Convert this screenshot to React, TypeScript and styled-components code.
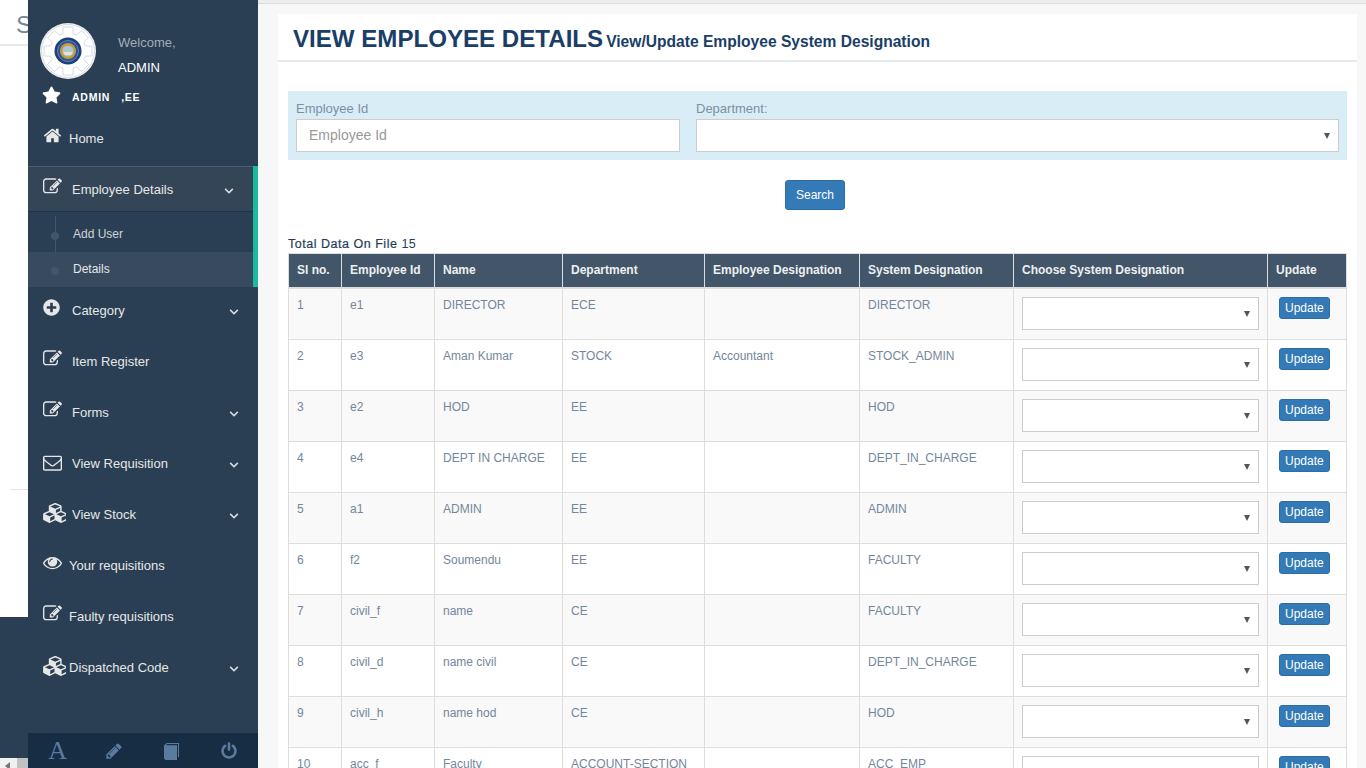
import React from 'react';
import styled, { createGlobalStyle } from 'styled-components';
import { FaChevronDown, FaPlusCircle, FaStar } from 'react-icons/fa';

const GlobalStyle = createGlobalStyle`
    html, body {
        margin: 0;
        height: 768px;
        overflow: hidden;
        background: #f7f7f7;
        font-family: "Liberation Sans", Arial, sans-serif;
        font-size: 13px;
        color: #73879c;
    }
    * {
        box-sizing: border-box;
    }
`;

const Page = styled.div`
    display: grid;
    grid-template-columns: 28px 230px 1fr;
    height: 768px;
    overflow: hidden;
`;

/* piece of the page behind the sidebar */
const BackStrip = styled.div`
    display: flex;
    flex-direction: column;
    background: #2a3f54;
    overflow: hidden;
`;

const BackContent = styled.div`
    height: 617px;
    background: #fff;
    overflow: hidden;
`;

const BackTitle = styled.div`
    height: 46px;
    padding: 10px 0 0 16px;
    border-bottom: 2px solid #e6e9ed;
    font-size: 24px;
    line-height: 30px;
    color: #73879c;
`;

const BackRule = styled.div`
    height: 1px;
    margin: 443px 0 0 10px;
    background: #e5e5e5;
`;

const BackScrollbar = styled.div`
    display: flex;
    align-items: center;
    height: 16px;
    margin-top: auto;
    padding-left: 5px;
    background: #f1f1f1;
`;

const ScrollArrow = styled.span`
    width: 0;
    height: 0;
    border-top: 4px solid transparent;
    border-bottom: 4px solid transparent;
    border-right: 5px solid #777;
`;

const ScrollThumb = styled.span`
    width: 11px;
    height: 16px;
    margin-left: 7px;
    background: #c1c1c1;
`;

const Sidebar = styled.aside`
    display: flex;
    flex-direction: column;
    height: 768px;
    background: #2a3f54;
    color: #e7e7e7;
`;

const Profile = styled.div`
    display: flex;
    height: 80px;
    padding: 23px 0 0 12px;
`;

const ProfileText = styled.div`
    margin-left: 22px;
    padding-top: 7px;
    font-size: 13px;
    line-height: 25px;
`;

const Welcome = styled.div`
    color: #a5adb5;
`;

const ProfileName = styled.div`
    color: #fff;
`;

const RoleRow = styled.div`
    display: flex;
    align-items: center;
    height: 32px;
    margin-bottom: 3px;
    padding-left: 14px;
    color: #fff;
    font-size: 10.5px;
    font-weight: 700;
    letter-spacing: 0.75px;
    white-space: pre;
`;

const RoleStar = styled(FaStar)`
    width: 19px;
    height: 18px;
    margin-top: -3px;
`;

const RoleText = styled.span`
    margin-left: 11px;
    margin-top: 1px;
`;

const MenuItem = styled.div`
    display: flex;
    align-items: center;
    height: 46px;
    margin-bottom: 5px;
    padding-left: 15px;
    font-size: 13px;
    color: #e7e7e7;
`;

const MenuIcon = styled.svg<{ $w: number; $h: number; $lift: number }>`
    flex: none;
    width: ${(p) => p.$w}px;
    height: ${(p) => p.$h}px;
    margin-top: -${(p) => p.$lift}px;
    fill: currentColor;
`;

const PlusIcon = styled(FaPlusCircle)`
    flex: none;
    width: 17px;
    height: 17px;
    margin: -5px 2px 0 0;
`;

const MenuLabel = styled.span<{ $left: number }>`
    margin-left: ${(p) => p.$left}px;
    margin-top: 1px;
`;

const Chevron = styled(FaChevronDown)`
    width: 10px;
    height: 10px;
    margin-left: auto;
    margin-right: 19px;
    margin-top: 3px;
    color: #d5dade;
`;

const ActiveGroup = styled.div`
    border-right: 5px solid #1abb9c;
`;

const ActiveHead = styled.div`
    display: flex;
    align-items: center;
    height: 46px;
    padding-left: 15px;
    border-top: 1px solid #4a5c6d;
    border-bottom: 1px solid #1f3346;
    background: #334557;
    color: #e7e7e7;

    ${Chevron} {
        margin-right: 19px;
    }
`;

const SubList = styled.div`
    position: relative;
    padding-top: 5px;

    &::before {
        content: '';
        position: absolute;
        left: 27px;
        top: 4px;
        bottom: 0;
        width: 1px;
        background: #425668;
    }
`;

const SubItem = styled.div<{ $current?: boolean }>`
    position: relative;
    display: flex;
    align-items: center;
    height: 35px;
    padding: 0 0 2px 45px;
    font-size: 12px;
    color: ${(p) => (p.$current ? '#e7e7e7' : '#cfd5da')};
    background: ${(p) => (p.$current ? '#374a5e' : 'transparent')};

    &::before {
        content: '';
        position: absolute;
        left: 23px;
        top: 15px;
        width: 8px;
        height: 8px;
        border-radius: 50%;
        background: #425668;
    }
`;

const SideFooter = styled.div`
    display: grid;
    grid-template-columns: repeat(4, 1fr);
    align-items: center;
    justify-items: center;
    height: 35px;
    margin-top: auto;
    background: #172d44;
    color: #5a7ba0;
`;

const FooterLetter = styled.span`
    padding-left: 2px;
    font-family: "Liberation Serif", serif;
    font-size: 26px;
    line-height: 35px;
`;

const FooterIcon = styled.svg`
    width: 18px;
    height: 18px;
    fill: currentColor;
`;

const Main = styled.main`
    min-width: 0;
    background: #f7f7f7;
`;

const TopStrip = styled.div`
    height: 4px;
    background: #ededed;
    border-bottom: 1px solid #d9dee4;
`;

const Panel = styled.section`
    width: 1079px;
    height: 760px;
    margin: 10px 0 0 20px;
    background: #fff;
    overflow: hidden;
`;

const PanelTitle = styled.header`
    display: flex;
    align-items: baseline;
    height: 48px;
    padding: 10px 0 0 15px;
    border-bottom: 2px solid #e6e9ed;
    color: #1a3e68;
    white-space: nowrap;
`;

const TitleMain = styled.h1`
    margin: 0;
    font-size: 24.1px;
    line-height: 30px;
    font-weight: 700;
`;

const TitleSub = styled.small`
    margin-left: 3px;
    font-size: 15.6px;
    font-weight: 700;
`;

const PanelBody = styled.div`
    padding: 29px 10px 0;
`;

const FilterBar = styled.div`
    display: grid;
    grid-template-columns: 384px 643px;
    column-gap: 16px;
    height: 69px;
    padding: 9px 8px 0;
    background: #d9edf7;
`;

const Field = styled.label`
    display: block;
`;

const FieldLabel = styled.div`
    height: 19px;
    font-size: 13px;
    line-height: 18px;
    color: #7d8fa3;
`;

const TextInput = styled.input`
    display: block;
    width: 100%;
    height: 33px;
    padding: 0 12px 1px;
    border: 1px solid #ccc;
    background: #fff;
    font-family: inherit;
    font-size: 14px;
    outline: none;

    &::placeholder {
        color: #999;
        opacity: 1;
    }
`;

const SelectBox = styled.div`
    position: relative;

    &::after {
        content: '';
        position: absolute;
        right: 9px;
        top: 14px;
        border-left: 3px solid transparent;
        border-right: 3px solid transparent;
        border-top: 6px solid #555;
        pointer-events: none;
    }
`;

const Select = styled.select`
    display: block;
    width: 100%;
    height: 33px;
    border: 1px solid #ccc;
    background: #fff;
    appearance: none;
    outline: none;
`;

const SearchRow = styled.div`
    display: flex;
    justify-content: center;
    margin-top: 20px;
    padding-right: 5px;
`;

const Button = styled.button<{ $small?: boolean }>`
    display: block;
    height: ${(p) => (p.$small ? 22 : 30)}px;
    padding: ${(p) => (p.$small ? '0 5px' : '0 10px')};
    border: 1px solid #2e6da4;
    border-radius: 3px;
    background: #337ab7;
    color: #fff;
    font-family: inherit;
    font-size: 12px;
`;

const TotalLine = styled.div`
    height: 18px;
    margin-top: 25px;
    font-size: 12.5px;
    line-height: 18px;
    letter-spacing: 0.52px;
    color: #1f3d5c;
`;

const TotalLabel = styled.span`
    -webkit-text-stroke: 0.2px #1f3d5c;
`;

const Table = styled.table`
    width: 1058px;
    table-layout: fixed;
    border-collapse: collapse;
    border: 1px solid #ddd;
    font-size: 12px;
`;

const HeadCell = styled.th`
    height: 34px;
    padding: 0 8px;
    border-right: 1px solid #d9dee4;
    border-bottom: 2px solid #ddd;
    background: #435568;
    color: #ecf0f1;
    font-size: 12px;
    font-weight: 700;
    text-align: left;
    white-space: nowrap;
`;

const Row = styled.tr<{ $odd: boolean }>`
    background: ${(p) => (p.$odd ? '#f9f9f9' : '#fff')};
`;

const Cell = styled.td`
    height: 51px;
    padding: 8px 8px 0;
    border: 1px solid #ddd;
    vertical-align: top;
    line-height: 17px;
    color: #73879c;
    white-space: nowrap;

    tr:first-child > & {
        height: 52px;
    }
`;

const ButtonCell = styled(Cell)`
    padding-left: 11px;
`;

const columns = [
    { title: 'Sl no.', width: 53 },
    { title: 'Employee Id', width: 93 },
    { title: 'Name', width: 128 },
    { title: 'Department', width: 142 },
    { title: 'Employee Designation', width: 155 },
    { title: 'System Designation', width: 154 },
    { title: 'Choose System Designation', width: 254 },
    { title: 'Update', width: 79 },
];

const employees = [
    ['1', 'e1', 'DIRECTOR', 'ECE', '', 'DIRECTOR'],
    ['2', 'e3', 'Aman Kumar', 'STOCK', 'Accountant', 'STOCK_ADMIN'],
    ['3', 'e2', 'HOD', 'EE', '', 'HOD'],
    ['4', 'e4', 'DEPT IN CHARGE', 'EE', '', 'DEPT_IN_CHARGE'],
    ['5', 'a1', 'ADMIN', 'EE', '', 'ADMIN'],
    ['6', 'f2', 'Soumendu', 'EE', '', 'FACULTY'],
    ['7', 'civil_f', 'name', 'CE', '', 'FACULTY'],
    ['8', 'civil_d', 'name civil', 'CE', '', 'DEPT_IN_CHARGE'],
    ['9', 'civil_h', 'name hod', 'CE', '', 'HOD'],
    ['10', 'acc_f', 'Faculty', 'ACCOUNT-SECTION', '', 'ACC_EMP'],
];

// old-style font awesome outlines, the current package only has the redrawn ones
const glyphs = {
    edit: {
        box: '0 0 1792 1792',
        w: 19,
        h: 19,
        lift: 6,
        d: 'M888 1184l116-116-152-152-116 116v56h96v96h56zm440-720q-16-16-33 1l-350 350q-17 17-1 33t33-1l350-350q17-17 1-33zm80 594v190q0 119-84.5 203.5t-203.5 84.5h-832q-119 0-203.5-84.5t-84.5-203.5v-832q0-119 84.5-203.5t203.5-84.5h832q63 0 117 25 15 7 18 23 3 17-9 29l-49 49q-14 14-32 8-23-6-45-6h-832q-66 0-113 47t-47 113v832q0 66 47 113t113 47h832q66 0 113-47t47-113v-126q0-13 9-22l64-64q15-15 35-7t20 29zm-96-738l288 288-672 672h-288v-288zm444 132l-92 92-288-288 92-92q28-28 68-28t68 28l152 152q28 28 28 68t-28 68z',
    },
    home: {
        box: '0 0 1792 1792',
        w: 19,
        h: 19,
        lift: 5,
        d: 'M1472 992v480q0 26-19 45t-45 19h-384v-384h-256v384h-384q-26 0-45-19t-19-45v-480q0-1 .5-3t.5-3l575-474 575 474q1 2 1 6zm223-69l-62 74q-8 9-21 11h-3q-13 0-21-7l-692-577-692 577q-12 8-24 7-13-2-21-11l-62-74q-8-10-7-23.5t11-21.5l719-599q32-26 76-26t76 26l244 204v-195q0-14 9-23t23-9h192q14 0 23 9t9 23v408l219 182q10 8 11 21.5t-7 23.5z',
    },
    cubes: {
        box: '0 0 2048 1792',
        w: 23,
        h: 20,
        lift: 2,
        d: 'M640 1632l384-192v-314l-384 164v342zm-64-454l404-173-404-173-404 173zm1088 454l384-192v-314l-384 164v342zm-64-454l404-173-404-173-404 173zm-448-293l384-165v-266l-384 164v267zm-64-379l441-189-441-189-441 189zm1088 518v416q0 36-19 67t-52 47l-448 224q-25 14-57 14t-57-14l-448-224q-4-2-7-4-2 2-7 4l-448 224q-25 14-57 14t-57-14l-448-224q-33-16-52-47t-19-67v-416q0-38 21.5-70t56.5-48l434-186v-400q0-38 21.5-70t56.5-48l448-192q23-10 50-10t50 10l448 192q35 16 56.5 48t21.5 70v400l434 186q36 16 57 48t21 70z',
    },
    envelope: {
        box: '0 0 1792 1792',
        w: 19,
        h: 19,
        lift: 2,
        d: 'M1664 1504v-768q-32 36-69 66-268 206-426 338-51 43-83 67t-86.5 48.5-102.5 24.5h-2q-48 0-102.5-24.5t-86.5-48.5-83-67q-158-132-426-338-37-30-69-66v768q0 13 9.5 22.5t22.5 9.5h1472q13 0 22.5-9.5t9.5-22.5zm0-1051v-24.5l-.5-13-3-12.5-5.5-9-9-7.5-14-2.5h-1472q-13 0-22.5 9.5t-9.5 22.5q0 168 147 284 193 152 401 317 6 5 35 29.5t46 37.5 44.5 31.5 50.5 27.5 43 9h2q20 0 43-9t50.5-27.5 44.5-31.5 46-37.5 35-29.5q208-165 401-317 54-43 100.5-115.5t46.5-131.5zm128-37v1088q0 66-47 113t-113 47h-1472q-66 0-113-47t-47-113v-1088q0-66 47-113t113-47h1472q66 0 113 47t47 113z',
    },
    eye: {
        box: '0 0 1792 1792',
        w: 19,
        h: 19,
        lift: 5,
        d: 'M1664 960q-152-236-381-353 61 104 61 225 0 185-131.5 316.5t-316.5 131.5-316.5-131.5-131.5-316.5q0-121 61-225-229 117-381 353 133 205 333.5 326.5t434.5 121.5 434.5-121.5 333.5-326.5zm-720-384q0-20-14-34t-34-14q-125 0-214.5 89.5t-89.5 214.5q0 20 14 34t34 14 34-14 14-34q0-86 61-147t147-61q20 0 34-14t14-34zm848 384q0 34-20 69-140 230-376.5 368.5t-499.5 138.5-499.5-139-376.5-368q-20-35-20-69t20-69q140-229 376.5-368t499.5-139 499.5 139 376.5 368q20 35 20 69z',
    },
};

type GlyphName = keyof typeof glyphs;

function Glyph({ name }: { name: GlyphName }) {
    const g = glyphs[name];
    return (
        <MenuIcon viewBox={g.box} $w={g.w} $h={g.h} $lift={g.lift} aria-hidden="true">
            <path d={g.d} />
        </MenuIcon>
    );
}

const menuItems: { icon: GlyphName | 'plus'; label: string; left: number; arrow: boolean }[] = [
    { icon: 'plus', label: 'Category', left: 10, arrow: true },
    { icon: 'edit', label: 'Item Register', left: 10, arrow: false },
    { icon: 'edit', label: 'Forms', left: 10, arrow: true },
    { icon: 'envelope', label: 'View Requisition', left: 10, arrow: true },
    { icon: 'cubes', label: 'View Stock', left: 6, arrow: true },
    { icon: 'eye', label: 'Your requisitions', left: 7, arrow: false },
    { icon: 'edit', label: 'Faulty requisitions', left: 7, arrow: false },
    { icon: 'cubes', label: 'Dispatched Code', left: 3, arrow: true },
];

function gearPoints() {
    const points: string[] = [];
    for (let i = 0; i < 8; i += 1) {
        const a = (i * Math.PI) / 4;
        [
            [-0.3, 18],
            [-0.2, 24.5],
            [0.2, 24.5],
            [0.3, 18],
        ].forEach(([offset, radius]) => {
            const x = 28 + radius * Math.sin(a + offset);
            const y = 28 - radius * Math.cos(a + offset);
            points.push(`${x.toFixed(1)},${y.toFixed(1)}`);
        });
    }
    return points.join(' ');
}

function Logo() {
    return (
        <svg width="56" height="56" viewBox="0 0 56 56" aria-hidden="true">
            <circle cx="28" cy="28" r="28" fill="#f0f2f3" />
            <circle cx="28" cy="28" r="26.5" fill="#fff" stroke="#d8dcdf" />
            <polygon points={gearPoints()} fill="#fff" stroke="#cbd8e2" strokeWidth="0.9" />
            <circle cx="28" cy="28" r="13.5" fill="#1e3f7a" />
            <circle cx="28" cy="28" r="10.5" fill="#2a5596" stroke="#8ea7c9" strokeWidth="0.6" />
            <circle cx="28" cy="28" r="8" fill="#c99a38" />
            <circle cx="28" cy="28" r="5.5" fill="#a9c7d6" />
            <path d="M23 29h10l-2 3h-6z" fill="#e9e4d2" />
        </svg>
    );
}

function App() {
    return (
        <Page>
            <GlobalStyle />
            <BackStrip>
                <BackContent>
                    <BackTitle>S</BackTitle>
                    <BackRule />
                </BackContent>
                <BackScrollbar>
                    <ScrollArrow />
                    <ScrollThumb />
                </BackScrollbar>
            </BackStrip>
            <Sidebar>
                <Profile>
                    <Logo />
                    <ProfileText>
                        <Welcome>Welcome,</Welcome>
                        <ProfileName>ADMIN</ProfileName>
                    </ProfileText>
                </Profile>
                <RoleRow>
                    <RoleStar />
                    <RoleText>ADMIN   ,EE</RoleText>
                </RoleRow>
                <MenuItem>
                    <Glyph name="home" />
                    <MenuLabel $left={7}>Home</MenuLabel>
                </MenuItem>
                <ActiveGroup>
                    <ActiveHead>
                        <Glyph name="edit" />
                        <MenuLabel $left={10}>Employee Details</MenuLabel>
                        <Chevron />
                    </ActiveHead>
                    <SubList>
                        <SubItem>Add User</SubItem>
                        <SubItem $current>Details</SubItem>
                    </SubList>
                </ActiveGroup>
                {menuItems.map((item) => (
                    <MenuItem key={item.label}>
                        {item.icon === 'plus' ? <PlusIcon /> : <Glyph name={item.icon} />}
                        <MenuLabel $left={item.left}>{item.label}</MenuLabel>
                        {item.arrow && <Chevron />}
                    </MenuItem>
                ))}
                <SideFooter>
                    <FooterLetter>A</FooterLetter>
                    <FooterIcon viewBox="0 0 1792 1792" aria-hidden="true">
                        <path d="M491 1536l91-91-235-235-91 91v107h128v128h107zm523-928q0-22-22-22-10 0-17 7l-542 542q-7 7-7 17 0 22 22 22 10 0 17-7l542-542q7-7 7-17zm-54-192l416 416-832 832h-416v-416zm683 96q0 53-37 90l-166 166-416-416 166-165q36-38 90-38 53 0 91 38l235 234q37 39 37 91z" />
                    </FooterIcon>
                    <FooterIcon viewBox="0 0 18 18" aria-hidden="true">
                        <path d="M1 3.5 3.5 1H16v14h-1V2H4L2.8 3.2H14V18H2.5L1 16.5z" />
                    </FooterIcon>
                    <FooterIcon viewBox="0 0 1792 1792" aria-hidden="true">
                        <path d="M1664 896q0 156-61 298t-164 245-245 164-298 61-298-61-245-164-164-245-61-298q0-182 80.5-343t226.5-270q43-32 95.5-25t83.5 50q32 42 24.5 94.5t-49.5 84.5q-98 74-151.5 181t-53.5 228q0 104 40.5 198.5t109.5 163.5 163.5 109.5 198.5 40.5 198.5-40.5 163.5-109.5 109.5-163.5 40.5-198.5q0-121-53.5-228t-151.5-181q-42-32-49.5-84.5t24.5-94.5q31-43 84-50t95 25q146 109 226.5 270t80.5 343zm-640-768v640q0 52-38 90t-90 38-90-38-38-90v-640q0-52 38-90t90-38 90 38 38 90z" />
                    </FooterIcon>
                </SideFooter>
            </Sidebar>
            <Main>
                <TopStrip />
                <Panel>
                    <PanelTitle>
                        <TitleMain>VIEW EMPLOYEE DETAILS</TitleMain>
                        <TitleSub>View/Update Employee System Designation</TitleSub>
                    </PanelTitle>
                    <PanelBody>
                        <FilterBar>
                            <Field>
                                <FieldLabel>Employee Id</FieldLabel>
                                <TextInput placeholder="Employee Id" />
                            </Field>
                            <Field>
                                <FieldLabel>Department:</FieldLabel>
                                <SelectBox>
                                    <Select />
                                </SelectBox>
                            </Field>
                        </FilterBar>
                        <SearchRow>
                            <Button>Search</Button>
                        </SearchRow>
                        <TotalLine>
                            <TotalLabel>Total Data On File</TotalLabel> 15
                        </TotalLine>
                        <Table>
                            <colgroup>
                                {columns.map((col) => (
                                    <col key={col.title} width={col.width} />
                                ))}
                            </colgroup>
                            <thead>
                                <tr>
                                    {columns.map((col) => (
                                        <HeadCell key={col.title}>{col.title}</HeadCell>
                                    ))}
                                </tr>
                            </thead>
                            <tbody>
                                {employees.map((row, index) => (
                                    <Row key={row[0]} $odd={index % 2 === 0}>
                                        {row.map((value, i) => (
                                            <Cell key={i}>{value}</Cell>
                                        ))}
                                        <Cell>
                                            <SelectBox>
                                                <Select />
                                            </SelectBox>
                                        </Cell>
                                        <ButtonCell>
                                            <Button $small>Update</Button>
                                        </ButtonCell>
                                    </Row>
                                ))}
                            </tbody>
                        </Table>
                    </PanelBody>
                </Panel>
            </Main>
        </Page>
    );
}

export default App;
